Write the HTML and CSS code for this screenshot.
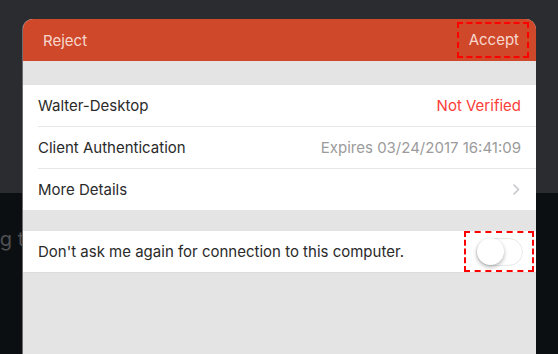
FILE: index.html
```html
<!DOCTYPE html>
<html lang="en">

<head>
    <meta charset="UTF-8">
    <meta name="viewport" content="width=device-width, initial-scale=1.0">
    <title>Connection Request</title>
    <link rel="stylesheet" href="styles.css">
</head>

<body>
    <div class="backdrop">
        <div class="backdrop-text">ng to<br>o</div>
    </div>

    <div class="sheet">
        <div class="sheet-header">
            <span class="header-btn">Reject</span>
            <span class="header-btn marked">Accept</span>
        </div>

        <div class="group">
            <div class="row">
                <span class="label">Walter-Desktop</span>
                <span class="value danger">Not Verified</span>
            </div>
            <div class="row">
                <span class="label">Client Authentication</span>
                <span class="value">Expires 03/24/2017 16:41:09</span>
            </div>
            <div class="row">
                <span class="label">More Details</span>
                <svg class="chevron" width="8" height="13" viewBox="0 0 8 13">
                    <path d="M1.5 1.5l5 5-5 5" fill="none" stroke="#c7c7cc" stroke-width="1.6" />
                </svg>
            </div>
        </div>

        <div class="group">
            <div class="row">
                <span class="label">Don't ask me again for connection to this computer.</span>
                <span class="toggle-wrap marked">
                    <span class="toggle"><span class="knob"></span></span>
                </span>
            </div>
        </div>
    </div>
</body>

</html>
```

FILE: styles.css
```css
body {
    margin: 0;
    padding: 0;
    height: 354px;
    overflow: hidden;
    font-family: "Inter", "Liberation Sans", sans-serif;
    background: linear-gradient(to bottom, #2b2c30 0, #2b2c30 193px, #0c0f12 193px);
    position: relative;
}

.backdrop {
    position: absolute;
    top: 0;
    left: 0;
    right: 0;
    bottom: 0;
}

.backdrop-text {
    position: absolute;
    top: 226px;
    left: -12px;
    font-size: 20px;
    line-height: 26px;
    color: #4f5052;
}

.sheet {
    position: relative;
    margin: 19px 0 0 23px;
    width: 513px;
    height: 335px;
    background-color: #e4e4e4;
    border-radius: 10px 10px 0 0;
    overflow: hidden;
    box-shadow: -1px 0 0 #6b6b6d;
}

.sheet-header {
    display: flex;
    justify-content: space-between;
    align-items: center;
    height: 42px;
    padding: 0 17px 0 20px;
    background-color: #d0482a;
}

.header-btn {
    font-size: 15px;
    color: #f6d8cf;
}

.marked {
    outline: 2px dashed #ff0000;
}

.sheet-header .marked {
    padding: 6px 8px 7px 10px;
    margin-right: -8px;
}

.group {
    margin-top: 24px;
    background-color: #ffffff;
}

.group + .group {
    margin-top: 21px;
    border-bottom: 1px solid #dcdcdc;
}

.row {
    display: flex;
    justify-content: space-between;
    align-items: center;
    height: 41px;
    margin-left: 15px;
    padding-right: 15px;
    border-bottom: 1px solid #e6e6e6;
}

.row:last-child {
    border-bottom: none;
}

.label {
    font-size: 15px;
    color: #2a2a2a;
}

.value {
    font-size: 15px;
    color: #9b9b9b;
}

.value.danger {
    color: #fc3d39;
}

.chevron {
    margin-right: 1px;
}

.toggle-wrap {
    display: flex;
    align-items: center;
    justify-content: center;
    width: 66px;
    height: 37px;
    margin-right: -11px;
}

.toggle {
    display: flex;
    align-items: center;
    width: 47px;
    height: 28px;
    border-radius: 14px;
    border: 1px solid #e8e8e8;
    box-sizing: border-box;
    background-color: #ffffff;
}

.knob {
    width: 27px;
    height: 27px;
    border-radius: 50%;
    background-color: #ffffff;
    box-shadow: 0 2px 4px rgba(0, 0, 0, 0.3);
}
```
